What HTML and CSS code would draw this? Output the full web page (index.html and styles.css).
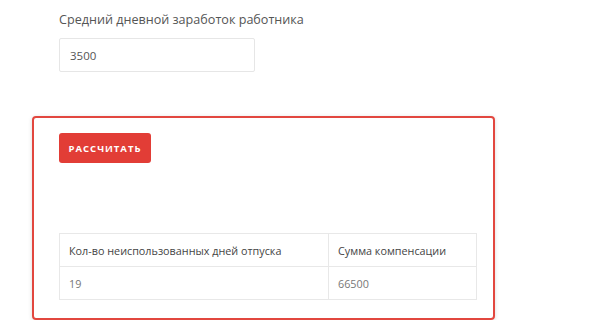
FILE: index.html
```html
<!DOCTYPE html>
<html lang="ru">
<head>
  <meta charset="UTF-8" />
  <meta name="viewport" content="width=device-width, initial-scale=1.0" />
  <title>Калькулятор компенсации отпуска</title>
  <link rel="stylesheet" href="styles.css">
</head>
<body>
  <div class="field">
    <label for="salary">Средний дневной заработок работника</label>
    <input type="text" id="salary" value="3500" />
  </div>

  <div class="result-box">
    <button class="btn">Рассчитать</button>

    <table class="result">
      <tr>
        <td class="col-days">Кол-во неиспользованных дней отпуска</td>
        <td>Сумма компенсации</td>
      </tr>
      <tr>
        <td>19</td>
        <td>66500</td>
      </tr>
    </table>
  </div>
</body>
</html>
```

FILE: styles.css
```css
body {
  margin: 0;
  font-family: "Open Sans", "Liberation Sans", sans-serif;
  background-color: #fff;
  color: #444;
}
.field {
  padding: 10px 0 0 59px;
}
.field label {
  display: block;
  font-size: 12.6px;
  line-height: 20px;
  color: #555;
  margin-bottom: 8px;
}
.field input {
  box-sizing: border-box;
  width: 196px;
  height: 34px;
  padding: 0 10px;
  border: 1px solid #e6e6e6;
  border-radius: 2px;
  font-family: inherit;
  font-size: 11.5px;
  color: #555;
  outline: none;
}
.result-box {
  box-sizing: border-box;
  margin: 44px 0 0 32px;
  width: 463px;
  height: 204px;
  padding: 15px 16px 0 25px;
  border: 2px solid #e2473f;
  border-radius: 4px;
  box-shadow: 0 1px 4px rgba(0,0,0,0.15);
}
.btn {
  display: block;
  width: 92px;
  height: 30px;
  padding: 0;
  border: none;
  border-radius: 3px;
  background-color: #e23d36;
  color: #fff;
  font-family: inherit;
  font-size: 9.5px;
  font-weight: bold;
  letter-spacing: 1px;
  text-transform: uppercase;
  margin-bottom: 70px;
}
.result {
  width: 418px;
  border-collapse: collapse;
  font-size: 10.8px;
  color: #444;
}
.result td {
  border: 1px solid #e8e8e8;
  height: 32px;
  padding: 0 9px;
}
.result tr + tr td {
  color: #777;
}
.col-days {
  width: 250px;
}
```
